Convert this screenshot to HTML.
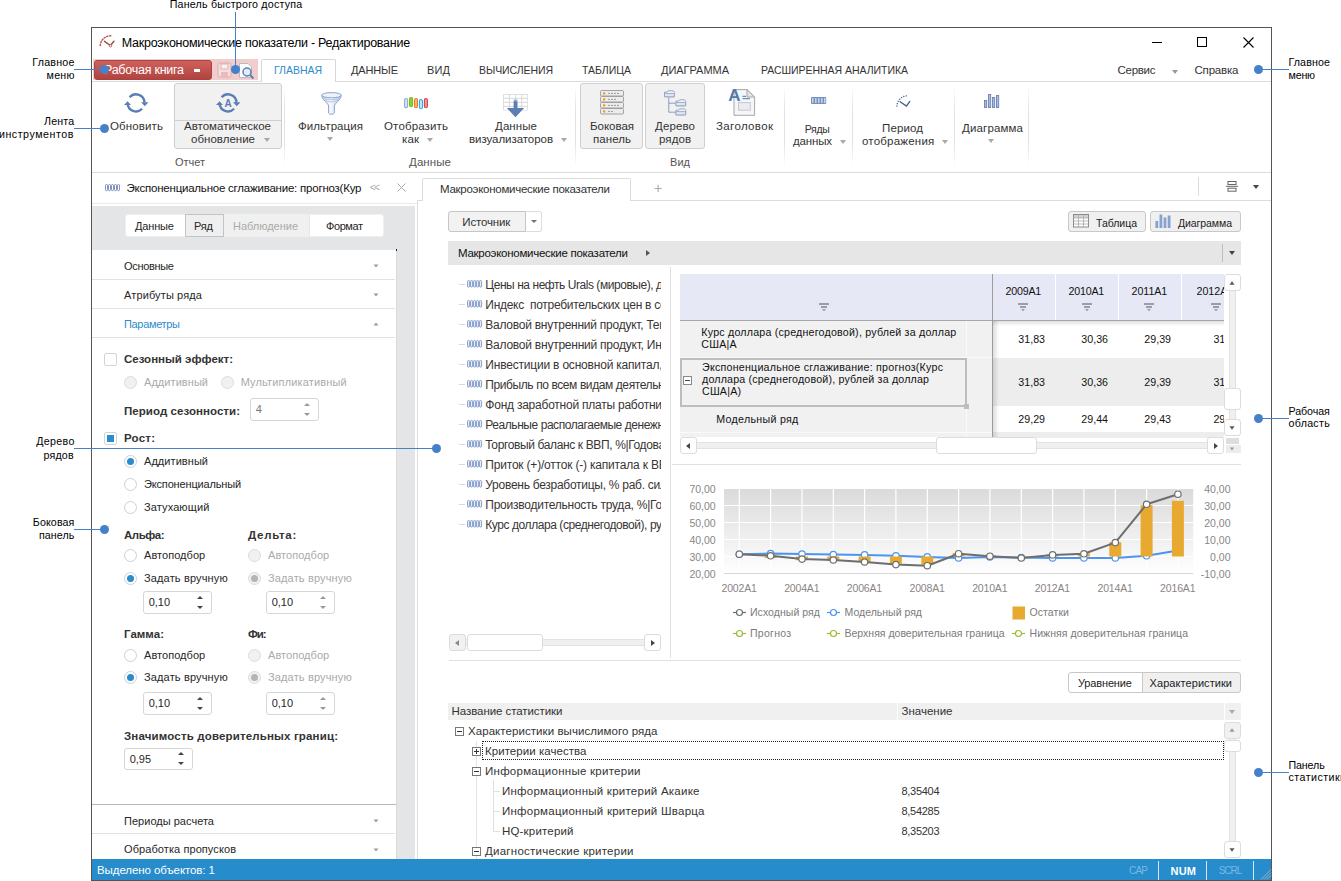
<!DOCTYPE html>
<html lang="ru"><head><meta charset="utf-8"><title>Макроэкономические показатели</title>
<style>
html,body{margin:0;padding:0;}
body{width:1341px;height:881px;position:relative;overflow:hidden;background:#fff;font-family:"Liberation Sans",sans-serif;}
.a{position:absolute;}
.t{position:absolute;white-space:pre;}
svg{overflow:visible;}
.tri{width:0;height:0;border-left:3.5px solid transparent;border-right:3.5px solid transparent;border-top:4px solid #999;}
.triu{width:0;height:0;border-left:3.5px solid transparent;border-right:3.5px solid transparent;border-bottom:4px solid #999;}

</style></head>
<body>
<div class="a" style="left:91px;top:27px;width:1181px;height:854px;background:#fff;border:1px solid #545454;box-sizing:border-box;"></div>
<span class="t" style="font-size:12.5px;color:#000;line-height:16.5px;top:35.05px;letter-spacing:-0.239px;left:121.7px;">Макроэкономические показатели - Редактирование</span>
<svg class="a" style="left:98px;top:35px" width="18" height="16" viewBox="0 0 18 16"><path d="M2.2 10.6 A10.5 10.5 0 0 1 12.8 0.8" fill="none" stroke="#c0504d" stroke-width="1.4" stroke-dasharray="1.3 1.6" stroke-linecap="round"/><path d="M6.5 6.3 L12.5 10.5 L15.9 6.2" fill="none" stroke="#a2504b" stroke-width="1.5" stroke-linecap="round"/><circle cx="12.5" cy="10.6" r="1.2" fill="#fff" stroke="#a2504b" stroke-width=".9"/></svg>
<div class="a" style="left:1152px;top:42px;width:10px;height:1px;background:#000;"></div>
<div class="a" style="left:1197px;top:37px;width:10px;height:10px;border:1px solid #000;box-sizing:border-box;"></div>
<svg class="a" style="left:1242.5px;top:37px" width="11" height="11" viewBox="0 0 11 11"><path d="M0.5 0.5 L10.5 10.5 M10.5 0.5 L0.5 10.5" stroke="#000" stroke-width="1.1" fill="none"/></svg>
<div class="a" style="left:93px;top:59px;width:165px;height:21px;background:#f3cdcd;"></div>
<div class="a" style="left:94px;top:60px;width:118px;height:20px;background:linear-gradient(#cf605d,#b04441);border:1px solid #a94340;box-sizing:border-box;border-radius:3px;"></div>
<span class="t" style="font-size:12.5px;color:#fff;line-height:16.5px;top:61.75px;letter-spacing:-0.251px;left:104px;">Рабочая книга</span>
<div class="a" style="left:194px;top:69px;width:6px;height:3px;background:#fff;"></div>
<svg class="a" style="left:217px;top:62px" width="16" height="16" viewBox="0 0 16 16"><rect x="1" y="1" width="13" height="14" rx="1.5" fill="#f6dede" stroke="#d9a9a9"/><rect x="4" y="2" width="7" height="5" fill="#fbeeee" stroke="#d9a9a9" stroke-width=".8"/><rect x="4" y="10" width="7" height="5" fill="#e9bcbc"/></svg>
<svg class="a" style="left:238px;top:62px" width="18" height="18" viewBox="0 0 18 18"><path d="M1.5 1.5 H10 L13.5 5 V15.5 H1.5 Z" fill="#fff" stroke="#b9b9c4"/><circle cx="9" cy="10" r="4" fill="#e6eefb" stroke="#5a7fb5" stroke-width="1.5"/><path d="M12 13 L15.5 16.5" stroke="#5a7fb5" stroke-width="2"/></svg>
<div class="a" style="left:92px;top:81px;width:1179px;height:1px;background:#dcdcdc;"></div>
<div class="a" style="left:261px;top:59px;width:75px;height:23px;background:#fff;border:1px solid #d6d6d6;box-sizing:border-box;border-bottom:none;border-radius:2px 2px 0 0;"></div>
<span class="t" style="font-size:10.5px;color:#2e8bcc;line-height:14.5px;top:62.75px;letter-spacing:-0.029px;left:274px;">ГЛАВНАЯ</span>
<span class="t" style="font-size:11.0px;color:#333;line-height:15.0px;top:62.5px;letter-spacing:-0.150px;left:351px;">ДАННЫЕ</span>
<span class="t" style="font-size:11.0px;color:#333;line-height:15.0px;top:62.5px;letter-spacing:0.148px;left:427px;">ВИД</span>
<span class="t" style="font-size:10.5px;color:#333;line-height:14.5px;top:62.75px;letter-spacing:-0.076px;left:479px;">ВЫЧИСЛЕНИЯ</span>
<span class="t" style="font-size:10.5px;color:#333;line-height:14.5px;top:62.75px;letter-spacing:-0.029px;left:582px;">ТАБЛИЦА</span>
<span class="t" style="font-size:11.0px;color:#333;line-height:15.0px;top:62.5px;letter-spacing:-0.033px;left:661px;">ДИАГРАММА</span>
<span class="t" style="font-size:10.5px;color:#333;line-height:14.5px;top:62.75px;letter-spacing:-0.042px;left:761px;">РАСШИРЕННАЯ АНАЛИТИКА</span>
<span class="t" style="font-size:11.5px;color:#333;line-height:15.5px;top:63.25px;letter-spacing:-0.278px;left:1117.5px;">Сервис</span>
<div class="a tri" style="left:1172px;top:69.5px"></div>
<span class="t" style="font-size:11.5px;color:#333;line-height:15.5px;top:63.25px;letter-spacing:-0.188px;left:1194.5px;">Справка</span>
<div class="a" style="left:92px;top:859px;width:1179px;height:21px;background:#278ccb;"></div>
<span class="t" style="font-size:11.5px;color:#fff;line-height:15.5px;top:863.25px;letter-spacing:-0.078px;left:97px;">Выделено объектов: 1</span>
<span class="t" style="font-size:10.0px;color:#79b8e2;line-height:14.0px;top:864.0px;letter-spacing:-0.781px;left:1129px;">CAP</span>
<div class="a" style="left:1158px;top:861px;width:1px;height:19px;background:#d6e9f6;"></div>
<span class="t" style="font-size:11.0px;color:#fff;line-height:15.0px;top:863.5px;font-weight:bold;letter-spacing:0.219px;left:1170.5px;">NUM</span>
<div class="a" style="left:1206px;top:861px;width:1px;height:19px;background:#d6e9f6;"></div>
<span class="t" style="font-size:10.0px;color:#79b8e2;line-height:14.0px;top:864.0px;letter-spacing:-0.996px;left:1218.7px;">SCRL</span>
<div class="a" style="left:1253px;top:861px;width:1px;height:19px;background:#d6e9f6;"></div>
<svg class="a" style="left:1259px;top:867px" width="12" height="13" viewBox="0 0 12 13"><path d="M12 2.5 L2 12.5 M12 5.5 L5 12.5 M12 8.5 L8 12.5" stroke="#9fb0bd" stroke-width="1"/></svg>
<div class="a" style="left:92px;top:172px;width:1179px;height:1px;background:#dcdcdc;"></div>
<div class="a" style="left:284px;top:85px;width:1px;height:82px;background:linear-gradient(#fff,#e2e2e2 30%,#e2e2e2 70%,#fff);"></div>
<div class="a" style="left:575px;top:85px;width:1px;height:82px;background:linear-gradient(#fff,#e2e2e2 30%,#e2e2e2 70%,#fff);"></div>
<div class="a" style="left:784px;top:85px;width:1px;height:82px;background:linear-gradient(#fff,#e2e2e2 30%,#e2e2e2 70%,#fff);"></div>
<div class="a" style="left:852px;top:85px;width:1px;height:82px;background:linear-gradient(#fff,#e2e2e2 30%,#e2e2e2 70%,#fff);"></div>
<div class="a" style="left:954px;top:85px;width:1px;height:82px;background:linear-gradient(#fff,#e2e2e2 30%,#e2e2e2 70%,#fff);"></div>
<div class="a" style="left:1028px;top:85px;width:1px;height:82px;background:linear-gradient(#fff,#e2e2e2 30%,#e2e2e2 70%,#fff);"></div>
<svg class="a" style="left:124px;top:93px" width="25" height="20" viewBox="0 0 25 20"><g fill="none" stroke="#5a7fb5" stroke-width="2.3"><path d="M5.6 4.3 A8.5 8.5 0 0 1 20.5 9.6"/><path d="M18.1 15.8 A8.5 8.5 0 0 1 3.5 10.4"/></g><path d="M17 9.3 L24.4 9.3 L20.8 13.2 Z" fill="#5a7fb5"/><path d="M0 12.1 L7 12.1 L3.6 8.2 Z" fill="#5a7fb5"/></svg>
<span class="t" style="font-size:11.5px;color:#333;line-height:15.5px;top:119.25px;letter-spacing:0.132px;left:110px;">Обновить</span>
<div class="a" style="left:174px;top:83px;width:108px;height:66px;background:#f1f1f1;border:1px solid #cfcfcf;box-sizing:border-box;border-radius:3px;"></div>
<div class="a" style="left:175px;top:120px;width:106px;height:1px;background:#cfcfcf;"></div>
<svg class="a" style="left:216px;top:93px" width="25" height="20" viewBox="0 0 25 20"><g fill="none" stroke="#5a7fb5" stroke-width="2.3"><path d="M5.6 4.3 A8.5 8.5 0 0 1 20.5 9.6"/><path d="M18.1 15.8 A8.5 8.5 0 0 1 3.5 10.4"/></g><path d="M17 9.3 L24.4 9.3 L20.8 13.2 Z" fill="#5a7fb5"/><path d="M0 12.1 L7 12.1 L3.6 8.2 Z" fill="#5a7fb5"/><text x="12.1" y="13.6" font-family="Liberation Sans, sans-serif" font-size="10" font-weight="bold" fill="#5a7fb5" text-anchor="middle">A</text></svg>
<span class="t" style="font-size:11.5px;color:#333;line-height:15.5px;top:119.25px;letter-spacing:0.008px;left:184px;">Автоматическое</span>
<span class="t" style="font-size:11.5px;color:#333;line-height:15.5px;top:132.45px;letter-spacing:0.016px;left:191px;">обновление</span>
<div class="a tri" style="left:264px;top:138px;border-top-color:#a8a8a8"></div>
<span class="t" style="font-size:11.0px;color:#555;line-height:15.0px;top:155.1px;letter-spacing:-0.031px;left:175px;">Отчет</span>
<svg class="a" style="left:320.5px;top:91.5px" width="21" height="23" viewBox="0 0 21 23"><defs><linearGradient id="fg" x1="0" x2="1"><stop offset="0" stop-color="#cfdbee"/><stop offset=".45" stop-color="#f6f9fd"/><stop offset="1" stop-color="#bccce6"/></linearGradient></defs><path d="M0.7 3.2 C0.7 7.5 7.6 11.5 7.6 14 V21 C7.6 22.6 13.4 22.6 13.4 21 V14 C13.4 11.5 20.3 7.5 20.3 3.2 Z" fill="url(#fg)" stroke="#8aa3cc" stroke-width="1"/><ellipse cx="10.5" cy="3.2" rx="9.8" ry="2.6" fill="#eef2f9" stroke="#8aa3cc" stroke-width="1"/><path d="M2 6 C6 8.2 15 8.2 19 6 M4.2 8.6 C8 10.2 13 10.2 16.8 8.6" fill="none" stroke="#a9bcdc" stroke-width=".8"/></svg>
<span class="t" style="font-size:11.5px;color:#333;line-height:15.5px;top:119.25px;letter-spacing:0.080px;left:298px;">Фильтрация</span>
<div class="a tri" style="left:327px;top:137px;border-top-color:#a8a8a8"></div>
<svg class="a" style="left:404px;top:96.5px" width="25" height="13" viewBox="0 0 25 13"><rect x="0.6" y="1.5" width="3" height="9.3" rx="1.5" fill="#dbe4f3" stroke="#8fa8d8" stroke-width="1.1"/><rect x="5.55" y="0.5" width="3" height="9.3" rx="1.5" fill="#8fd03a" stroke="#76bd22" stroke-width="1.1"/><rect x="10.5" y="1.5" width="3" height="9.3" rx="1.5" fill="#fbb98f" stroke="#f47a20" stroke-width="1.1"/><rect x="15.450000000000001" y="2.5" width="3" height="9.3" rx="1.5" fill="#c4ebf6" stroke="#2eaae8" stroke-width="1.1"/><rect x="20.400000000000002" y="1.5" width="3" height="9.3" rx="1.5" fill="#ee9a9a" stroke="#d34545" stroke-width="1.1"/></svg>
<span class="t" style="font-size:11.5px;color:#333;line-height:15.5px;top:119.25px;letter-spacing:0.146px;left:384px;">Отобразить</span>
<span class="t" style="font-size:11.5px;color:#333;line-height:15.5px;top:132.45px;letter-spacing:0.141px;left:402px;">как</span>
<div class="a tri" style="left:427px;top:138px;border-top-color:#a8a8a8"></div>
<svg class="a" style="left:503px;top:94px" width="25" height="24" viewBox="0 0 25 24"><defs><linearGradient id="ag" x1="0" y1="0" x2="0" y2="1"><stop offset="0" stop-color="#5b7fb0" stop-opacity="0"/><stop offset=".35" stop-color="#5b7fb0"/></linearGradient></defs><rect x="0" y="0" width="25" height="16.5" rx="1" fill="#dcdcdc"/><rect x="0.9" y="0.9" width="5" height="2.9" fill="#fff"/><rect x="7.0" y="0.9" width="5" height="2.9" fill="#fff"/><rect x="13.1" y="0.9" width="5" height="2.9" fill="#fff"/><rect x="19.199999999999996" y="0.9" width="5" height="2.9" fill="#fff"/><rect x="0.9" y="4.9" width="5" height="2.9" fill="#fff"/><rect x="7.0" y="4.9" width="5" height="2.9" fill="#fff"/><rect x="13.1" y="4.9" width="5" height="2.9" fill="#fff"/><rect x="19.199999999999996" y="4.9" width="5" height="2.9" fill="#fff"/><rect x="0.9" y="8.9" width="5" height="2.9" fill="#fff"/><rect x="7.0" y="8.9" width="5" height="2.9" fill="#fff"/><rect x="13.1" y="8.9" width="5" height="2.9" fill="#fff"/><rect x="19.199999999999996" y="8.9" width="5" height="2.9" fill="#fff"/><rect x="0.9" y="12.9" width="5" height="2.9" fill="#fff"/><rect x="7.0" y="12.9" width="5" height="2.9" fill="#fff"/><rect x="13.1" y="12.9" width="5" height="2.9" fill="#fff"/><rect x="19.199999999999996" y="12.9" width="5" height="2.9" fill="#fff"/><rect x="10.6" y="4.5" width="3.9" height="10" fill="url(#ag)"/><path d="M3.9 14.1 H21.1 L12.5 23.2 Z" fill="#5b7fb0"/></svg>
<span class="t" style="font-size:11.5px;color:#333;line-height:15.5px;top:119.25px;letter-spacing:0.087px;left:495px;">Данные</span>
<span class="t" style="font-size:11.5px;color:#333;line-height:15.5px;top:132.45px;letter-spacing:-0.053px;left:469px;">визуализаторов</span>
<div class="a tri" style="left:561px;top:138px;border-top-color:#a8a8a8"></div>
<span class="t" style="font-size:11.5px;color:#555;line-height:15.5px;top:154.85px;letter-spacing:0.087px;left:409px;">Данные</span>
<div class="a" style="left:580px;top:83px;width:63px;height:66px;background:#f1f1f1;border:1px solid #cfcfcf;box-sizing:border-box;border-radius:3px;"></div>
<svg class="a" style="left:600px;top:90px" width="24" height="25" viewBox="0 0 24 25"><rect x="0.5" y="0.5" width="23" height="5.5" rx="1" fill="#ececec" stroke="#9a9a9a" stroke-width=".9"/><rect x="3" y="2.3" width="2.2" height="2.2" fill="#f29a1f"/><path d="M8 3.4 H20" stroke="#9a9a9a" stroke-width="1" stroke-dasharray="2 1"/><rect x="0.5" y="6.5" width="23" height="5.5" rx="1" fill="#ececec" stroke="#9a9a9a" stroke-width=".9"/><rect x="3" y="8.3" width="2.2" height="2.2" fill="#f29a1f"/><path d="M8 9.4 H17" stroke="#9a9a9a" stroke-width="1" stroke-dasharray="2 1"/><rect x="0.5" y="12.5" width="23" height="5.5" rx="1" fill="#ececec" stroke="#9a9a9a" stroke-width=".9"/><rect x="3" y="14.3" width="2.2" height="2.2" fill="#f29a1f"/><path d="M8 15.4 H20" stroke="#9a9a9a" stroke-width="1" stroke-dasharray="2 1"/><rect x="0.5" y="18.5" width="23" height="5.5" rx="1" fill="#ececec" stroke="#9a9a9a" stroke-width=".9"/><rect x="3" y="20.3" width="2.2" height="2.2" fill="#f29a1f"/><path d="M8 21.4 H14" stroke="#9a9a9a" stroke-width="1" stroke-dasharray="2 1"/></svg>
<span class="t" style="font-size:11.5px;color:#333;line-height:15.5px;top:119.25px;letter-spacing:-0.018px;left:590px;">Боковая</span>
<span class="t" style="font-size:11.5px;color:#333;line-height:15.5px;top:132.45px;letter-spacing:0.059px;left:593px;">панель</span>
<div class="a" style="left:645px;top:83px;width:60px;height:66px;background:#f1f1f1;border:1px solid #cfcfcf;box-sizing:border-box;border-radius:3px;"></div>
<svg class="a" style="left:663.5px;top:90px" width="23" height="26" viewBox="0 0 23 26"><path d="M4.8 7.4 V22.2 H11.7 M4.8 13.2 H11.7" fill="none" stroke="#8d9dbd" stroke-width="1"/><path d="M0.5 2.1 H3.2 L4.2 0.8 H9.2 L10.3 2.3 V6.8 H0.5 Z" fill="#f2f5fa" stroke="#8d9dbd" stroke-width=".9"/><rect x="0.5" y="3.5" width="9.8" height="3.3" rx=".8" fill="#dfe6f2" stroke="#8d9dbd" stroke-width=".8"/><path d="M11.9 11.100000000000001 H14.600000000000001 L15.600000000000001 9.8 H20.6 L21.700000000000003 11.3 V15.8 H11.9 Z" fill="#f2f5fa" stroke="#8d9dbd" stroke-width=".9"/><rect x="11.9" y="12.5" width="9.8" height="3.3" rx=".8" fill="#dfe6f2" stroke="#8d9dbd" stroke-width=".8"/><path d="M11.9 20.2 H14.600000000000001 L15.600000000000001 18.9 H20.6 L21.700000000000003 20.4 V24.9 H11.9 Z" fill="#f2f5fa" stroke="#8d9dbd" stroke-width=".9"/><rect x="11.9" y="21.599999999999998" width="9.8" height="3.3" rx=".8" fill="#dfe6f2" stroke="#8d9dbd" stroke-width=".8"/></svg>
<span class="t" style="font-size:11.5px;color:#333;line-height:15.5px;top:119.25px;letter-spacing:0.128px;left:655px;">Дерево</span>
<span class="t" style="font-size:11.5px;color:#333;line-height:15.5px;top:132.45px;letter-spacing:0.070px;left:659px;">рядов</span>
<svg class="a" style="left:728px;top:88px" width="28" height="28" viewBox="0 0 28 28"><path d="M6 1.6 H19 L26.6 9 V27.3 H6 Z" fill="#f6f6f8" stroke="#a6a6ae"/><path d="M19 1.6 V9 H26.6 Z" fill="#e4e4ea" stroke="#a6a6ae" stroke-linejoin="round"/><rect x="10.5" y="14.6" width="11.8" height="7.6" fill="#ececf0" stroke="#c6c6ce"/><path d="M14.5 8.3 H18 M14.5 10.6 H22" stroke="#6f8cc0" stroke-width="1.3"/><text x="0.3" y="12.9" font-family="Liberation Sans, sans-serif" font-size="17" font-weight="bold" fill="#5279b0">A</text></svg>
<span class="t" style="font-size:11.5px;color:#333;line-height:15.5px;top:119.25px;letter-spacing:0.365px;left:716px;">Заголовок</span>
<span class="t" style="font-size:11.0px;color:#555;line-height:15.0px;top:155.1px;letter-spacing:0.047px;left:670px;">Вид</span>
<svg class="a" style="left:810.8px;top:96.9px" width="16" height="8" viewBox="0 0 16 8"><rect x="0" y="0" width="15.2" height="7" rx="1" fill="#7890bf"/><rect x="1.3" y="1" width="1.1" height="5" rx=".5" fill="#e8eef8"/><rect x="4.3" y="1" width="1.1" height="5" rx=".5" fill="#e8eef8"/><rect x="7.3" y="1" width="1.1" height="5" rx=".5" fill="#e8eef8"/><rect x="10.3" y="1" width="1.1" height="5" rx=".5" fill="#e8eef8"/><rect x="13.3" y="1" width="1.1" height="5" rx=".5" fill="#e8eef8"/></svg>
<span class="t" style="font-size:10.5px;color:#333;line-height:14.5px;top:121.75px;letter-spacing:-0.272px;left:804.7px;">Ряды</span>
<span class="t" style="font-size:11.5px;color:#333;line-height:15.5px;top:134.45px;letter-spacing:-0.166px;left:793px;">данных</span>
<div class="a tri" style="left:840px;top:140px;border-top-color:#a8a8a8"></div>
<svg class="a" style="left:896px;top:94.5px" width="15" height="13" viewBox="0 0 15 13"><path d="M0.9 11.2 A10.5 10.5 0 0 1 11.2 0.8" fill="none" stroke="#4f6a94" stroke-width="1.3" stroke-dasharray="0.3 2.2" stroke-linecap="round"/><path d="M4.1 6.7 L10.4 11.1 L13.7 6.6" fill="none" stroke="#46608c" stroke-width="1.4" stroke-linecap="round"/></svg>
<span class="t" style="font-size:11.5px;color:#333;line-height:15.5px;top:121.25px;letter-spacing:0.131px;left:882px;">Период</span>
<span class="t" style="font-size:11.5px;color:#333;line-height:15.5px;top:134.45px;letter-spacing:0.214px;left:862px;">отображения</span>
<div class="a tri" style="left:942px;top:140px;border-top-color:#a8a8a8"></div>
<svg class="a" style="left:984px;top:94px" width="17" height="15" viewBox="0 0 17 15"><rect x="0.5" y="6.5" width="2.2" height="7" fill="#a9bbdd" stroke="#6d83b3" stroke-width=".9"/><rect x="4.5" y="0.5" width="2.2" height="13" fill="#a9bbdd" stroke="#6d83b3" stroke-width=".9"/><rect x="8.5" y="3.5" width="2.2" height="10" fill="#a9bbdd" stroke="#6d83b3" stroke-width=".9"/><rect x="12.5" y="1.5" width="2.2" height="12" fill="#a9bbdd" stroke="#6d83b3" stroke-width=".9"/></svg>
<span class="t" style="font-size:11.5px;color:#333;line-height:15.5px;top:121.25px;letter-spacing:0.148px;left:962px;">Диаграмма</span>
<div class="a tri" style="left:988px;top:139px;border-top-color:#a8a8a8"></div>
<svg class="a" style="left:105px;top:184.3px" width="16" height="7.2" viewBox="0 0 16 7.2"><rect x="0.5" y="0.5" width="2.0" height="6.2" rx="1" fill="#fff" stroke="#7185b5" stroke-width=".9"/><rect x="3.5" y="0.5" width="2.0" height="6.2" rx="1" fill="#fff" stroke="#7185b5" stroke-width=".9"/><rect x="6.5" y="0.5" width="2.0" height="6.2" rx="1" fill="#fff" stroke="#7185b5" stroke-width=".9"/><rect x="9.5" y="0.5" width="2.0" height="6.2" rx="1" fill="#fff" stroke="#7185b5" stroke-width=".9"/><rect x="12.5" y="0.5" width="2.0" height="6.2" rx="1" fill="#fff" stroke="#7185b5" stroke-width=".9"/></svg>
<span class="t" style="font-size:11.5px;color:#111;line-height:15.5px;top:180.95px;letter-spacing:-0.221px;left:126.5px;">Экспоненциальное сглаживание: прогноз(Кур</span>
<span class="t" style="font-size:10.0px;color:#aaa;line-height:14.0px;top:181.3px;letter-spacing:-1.287px;left:369.7px;">&lt;&lt;</span>
<svg class="a" style="left:397px;top:183px" width="9" height="9" viewBox="0 0 9 9"><path d="M0.5 0.5 L8.5 8.5 M8.5 0.5 L0.5 8.5" stroke="#aaa" stroke-width="1" fill="none"/></svg>
<div class="a" style="left:92px;top:203px;width:325px;height:1px;background:#e9e9e9;"></div>
<div class="a" style="left:92px;top:206px;width:323px;height:653px;background:#e4e5e6;"></div>
<div class="a" style="left:417px;top:200px;width:1px;height:659px;background:#dedede;"></div>
<div class="a" style="left:125px;top:214px;width:259px;height:23px;background:#fff;border:1px solid #efefef;box-sizing:border-box;border-radius:3px;"></div>
<div class="a" style="left:224px;top:215px;width:85px;height:21px;background:#f0f0f0;"></div>
<div class="a" style="left:185px;top:214px;width:39px;height:23px;background:#efefef;border:1px solid #c4c4c4;box-sizing:border-box;"></div>
<div class="a" style="left:309px;top:215px;width:1px;height:21px;background:#e6e6e6;"></div>
<span class="t" style="font-size:11px;color:#262626;line-height:15px;top:218.5px;letter-spacing:-0.150px;left:135px;">Данные</span>
<span class="t" style="font-size:11px;color:#262626;line-height:15px;top:218.5px;letter-spacing:-0.180px;left:194px;">Ряд</span>
<span class="t" style="font-size:11px;color:#aaa;line-height:15px;top:218.5px;letter-spacing:-0.019px;left:233px;">Наблюдение</span>
<span class="t" style="font-size:11px;color:#262626;line-height:15px;top:218.5px;letter-spacing:-0.416px;left:326px;">Формат</span>
<div class="a" style="left:92px;top:249.5px;width:304px;height:609.5px;background:#fff;"></div>
<div class="a" style="left:396px;top:250px;width:1px;height:609px;background:#dadbdc;"></div>
<div class="a" style="left:396px;top:249px;width:1px;height:2px;background:#222;"></div>
<span class="t" style="font-size:11px;color:#262626;line-height:15px;top:258.5px;letter-spacing:-0.315px;left:124px;">Основные</span>
<div class="a tri" style="left:373px;top:264px;transform:scale(.8)"></div>
<div class="a" style="left:92px;top:279px;width:303px;height:1px;background:#e2e2e2;"></div>
<span class="t" style="font-size:11px;color:#262626;line-height:15px;top:287.5px;letter-spacing:0.129px;left:124px;">Атрибуты ряда</span>
<div class="a tri" style="left:373px;top:293px;transform:scale(.8)"></div>
<div class="a" style="left:92px;top:308px;width:303px;height:1px;background:#e2e2e2;"></div>
<span class="t" style="font-size:11px;color:#2e8bcc;line-height:15px;top:316.5px;letter-spacing:-0.330px;left:124px;">Параметры</span>
<div class="a triu" style="left:373px;top:322px;transform:scale(.8)"></div>
<div class="a" style="left:92px;top:337px;width:303px;height:1px;background:#e2e2e2;"></div>
<div class="a" style="left:104px;top:353px;width:13px;height:13px;background:#fff;border:1px solid #d4d4d4;box-sizing:border-box;border-radius:2px;"></div>
<span class="t" style="font-size:11.5px;color:#333;line-height:15.5px;top:352.25px;font-weight:bold;letter-spacing:-0.005px;left:124px;">Сезонный эффект:</span>
<div class="a" style="left:124.2px;top:376.09999999999997px;width:12.6px;height:12.6px;background:#f1f1f1;border:1px solid #dcdcdc;box-sizing:border-box;border-radius:7px;"></div>
<span class="t" style="font-size:11px;color:#aaa;line-height:15px;top:375.3px;letter-spacing:0.057px;left:144px;">Аддитивный</span>
<div class="a" style="left:221.2px;top:376.09999999999997px;width:12.6px;height:12.6px;background:#f1f1f1;border:1px solid #dcdcdc;box-sizing:border-box;border-radius:7px;"></div>
<span class="t" style="font-size:11px;color:#aaa;line-height:15px;top:375.3px;letter-spacing:0.148px;left:240.7px;">Мультипликативный</span>
<span class="t" style="font-size:11.5px;color:#333;line-height:15.5px;top:404.05px;font-weight:bold;letter-spacing:0.055px;left:124px;">Период сезонности:</span>
<div class="a" style="left:250px;top:398px;width:69px;height:23px;background:#fff;border:1px solid #d6d6d6;box-sizing:border-box;border-radius:3px;"></div>
<span class="t" style="font-size:11px;color:#777;line-height:15px;top:402.3px;left:255.7px;">4</span>
<div class="a" style="left:303.6px;top:402.9px;width:0;height:0;border-left:3.5px solid transparent;border-right:3.5px solid transparent;border-bottom:3.6px solid #999"></div>
<div class="a" style="left:303.6px;top:412.7px;width:0;height:0;border-left:3.5px solid transparent;border-right:3.5px solid transparent;border-top:3.6px solid #999"></div>
<div class="a" style="left:104px;top:432px;width:13px;height:13px;background:#fff;border:1px solid #d4d4d4;box-sizing:border-box;border-radius:2px;"></div>
<div class="a" style="left:107px;top:435px;width:7px;height:7px;background:#2a8dcc;"></div>
<span class="t" style="font-size:11.5px;color:#333;line-height:15.5px;top:431.25px;font-weight:bold;letter-spacing:0.219px;left:124px;">Рост:</span>
<div class="a" style="left:124.2px;top:455.0px;width:12.6px;height:12.6px;background:#fff;border:1px solid #cfcfcf;box-sizing:border-box;border-radius:7px;"></div>
<div class="a" style="left:127.1px;top:457.90000000000003px;width:6.8px;height:6.8px;background:#2a8dcc;border-radius:4px;"></div>
<span class="t" style="font-size:11px;color:#262626;line-height:15px;top:454.2px;letter-spacing:0.057px;left:144px;">Аддитивный</span>
<div class="a" style="left:124.2px;top:478.0px;width:12.6px;height:12.6px;background:#fff;border:1px solid #cfcfcf;box-sizing:border-box;border-radius:7px;"></div>
<span class="t" style="font-size:11px;color:#262626;line-height:15px;top:477.0px;letter-spacing:-0.162px;left:144px;">Экспоненциальный</span>
<div class="a" style="left:124.2px;top:501.0px;width:12.6px;height:12.6px;background:#fff;border:1px solid #cfcfcf;box-sizing:border-box;border-radius:7px;"></div>
<span class="t" style="font-size:11px;color:#262626;line-height:15px;top:500.2px;letter-spacing:0.115px;left:144px;">Затухающий</span>
<span class="t" style="font-size:11.5px;color:#333;line-height:15.5px;top:527.85px;font-weight:bold;letter-spacing:-0.474px;left:124px;">Альфа:</span>
<span class="t" style="font-size:11.5px;color:#333;line-height:15.5px;top:527.85px;font-weight:bold;letter-spacing:0.724px;left:248px;">Дельта:</span>
<div class="a" style="left:124.2px;top:549.0px;width:12.6px;height:12.6px;background:#fff;border:1px solid #cfcfcf;box-sizing:border-box;border-radius:7px;"></div>
<span class="t" style="font-size:11px;color:#262626;line-height:15px;top:548.1px;letter-spacing:0.048px;left:144px;">Автоподбор</span>
<div class="a" style="left:124.2px;top:572.0px;width:12.6px;height:12.6px;background:#fff;border:1px solid #cfcfcf;box-sizing:border-box;border-radius:7px;"></div>
<div class="a" style="left:127.1px;top:574.9px;width:6.8px;height:6.8px;background:#2a8dcc;border-radius:4px;"></div>
<span class="t" style="font-size:11px;color:#262626;line-height:15px;top:571.1px;letter-spacing:0.148px;left:144px;">Задать вручную</span>
<div class="a" style="left:248.2px;top:549.0px;width:12.6px;height:12.6px;background:#f1f1f1;border:1px solid #dcdcdc;box-sizing:border-box;border-radius:7px;"></div>
<span class="t" style="font-size:11px;color:#aaa;line-height:15px;top:548.1px;letter-spacing:0.048px;left:268px;">Автоподбор</span>
<div class="a" style="left:248.2px;top:572.0px;width:12.6px;height:12.6px;background:#f1f1f1;border:1px solid #dcdcdc;box-sizing:border-box;border-radius:7px;"></div>
<div class="a" style="left:251.1px;top:574.9px;width:6.8px;height:6.8px;background:#b5b5b5;border-radius:4px;"></div>
<span class="t" style="font-size:11px;color:#aaa;line-height:15px;top:571.1px;letter-spacing:0.148px;left:268px;">Задать вручную</span>
<div class="a" style="left:143px;top:591.2px;width:69px;height:22.4px;background:#fff;border:1px solid #d6d6d6;box-sizing:border-box;border-radius:3px;"></div>
<span class="t" style="font-size:11px;color:#262626;line-height:15px;top:595.2px;left:148.7px;">0,10</span>
<div class="a" style="left:196.6px;top:595.8000000000001px;width:0;height:0;border-left:3.5px solid transparent;border-right:3.5px solid transparent;border-bottom:3.6px solid #444"></div>
<div class="a" style="left:196.6px;top:605.6000000000001px;width:0;height:0;border-left:3.5px solid transparent;border-right:3.5px solid transparent;border-top:3.6px solid #444"></div>
<div class="a" style="left:266px;top:591.2px;width:69px;height:22.4px;background:#fff;border:1px solid #d6d6d6;box-sizing:border-box;border-radius:3px;"></div>
<span class="t" style="font-size:11px;color:#262626;line-height:15px;top:595.2px;left:271.7px;">0,10</span>
<div class="a" style="left:319.6px;top:595.8000000000001px;width:0;height:0;border-left:3.5px solid transparent;border-right:3.5px solid transparent;border-bottom:3.6px solid #999"></div>
<div class="a" style="left:319.6px;top:605.6000000000001px;width:0;height:0;border-left:3.5px solid transparent;border-right:3.5px solid transparent;border-top:3.6px solid #999"></div>
<span class="t" style="font-size:11.5px;color:#333;line-height:15.5px;top:626.85px;font-weight:bold;letter-spacing:0.028px;left:124px;">Гамма:</span>
<span class="t" style="font-size:11.5px;color:#333;line-height:15.5px;top:626.85px;font-weight:bold;letter-spacing:-1.059px;left:248px;">Фи:</span>
<div class="a" style="left:124.2px;top:649.0px;width:12.6px;height:12.6px;background:#fff;border:1px solid #cfcfcf;box-sizing:border-box;border-radius:7px;"></div>
<span class="t" style="font-size:11px;color:#262626;line-height:15px;top:648.1px;letter-spacing:0.048px;left:144px;">Автоподбор</span>
<div class="a" style="left:124.2px;top:671.0px;width:12.6px;height:12.6px;background:#fff;border:1px solid #cfcfcf;box-sizing:border-box;border-radius:7px;"></div>
<div class="a" style="left:127.1px;top:673.9px;width:6.8px;height:6.8px;background:#2a8dcc;border-radius:4px;"></div>
<span class="t" style="font-size:11px;color:#262626;line-height:15px;top:670.1px;letter-spacing:0.148px;left:144px;">Задать вручную</span>
<div class="a" style="left:248.2px;top:649.0px;width:12.6px;height:12.6px;background:#f1f1f1;border:1px solid #dcdcdc;box-sizing:border-box;border-radius:7px;"></div>
<span class="t" style="font-size:11px;color:#aaa;line-height:15px;top:648.1px;letter-spacing:0.048px;left:268px;">Автоподбор</span>
<div class="a" style="left:248.2px;top:671.0px;width:12.6px;height:12.6px;background:#f1f1f1;border:1px solid #dcdcdc;box-sizing:border-box;border-radius:7px;"></div>
<div class="a" style="left:251.1px;top:673.9px;width:6.8px;height:6.8px;background:#b5b5b5;border-radius:4px;"></div>
<span class="t" style="font-size:11px;color:#aaa;line-height:15px;top:670.1px;letter-spacing:0.148px;left:268px;">Задать вручную</span>
<div class="a" style="left:143px;top:692.2px;width:69px;height:22.4px;background:#fff;border:1px solid #d6d6d6;box-sizing:border-box;border-radius:3px;"></div>
<span class="t" style="font-size:11px;color:#262626;line-height:15px;top:696.2px;left:148.7px;">0,10</span>
<div class="a" style="left:196.6px;top:696.8000000000001px;width:0;height:0;border-left:3.5px solid transparent;border-right:3.5px solid transparent;border-bottom:3.6px solid #444"></div>
<div class="a" style="left:196.6px;top:706.6000000000001px;width:0;height:0;border-left:3.5px solid transparent;border-right:3.5px solid transparent;border-top:3.6px solid #444"></div>
<div class="a" style="left:266px;top:692.2px;width:69px;height:22.4px;background:#fff;border:1px solid #d6d6d6;box-sizing:border-box;border-radius:3px;"></div>
<span class="t" style="font-size:11px;color:#262626;line-height:15px;top:696.2px;left:271.7px;">0,10</span>
<div class="a" style="left:319.6px;top:696.8000000000001px;width:0;height:0;border-left:3.5px solid transparent;border-right:3.5px solid transparent;border-bottom:3.6px solid #999"></div>
<div class="a" style="left:319.6px;top:706.6000000000001px;width:0;height:0;border-left:3.5px solid transparent;border-right:3.5px solid transparent;border-top:3.6px solid #999"></div>
<span class="t" style="font-size:11.5px;color:#333;line-height:15.5px;top:729.25px;font-weight:bold;letter-spacing:0.156px;left:124px;">Значимость доверительных границ:</span>
<div class="a" style="left:124px;top:748px;width:69px;height:22px;background:#fff;border:1px solid #d6d6d6;box-sizing:border-box;border-radius:3px;"></div>
<span class="t" style="font-size:11px;color:#262626;line-height:15px;top:751.8px;left:129.7px;">0,95</span>
<div class="a" style="left:177.6px;top:752.4px;width:0;height:0;border-left:3.5px solid transparent;border-right:3.5px solid transparent;border-bottom:3.6px solid #444"></div>
<div class="a" style="left:177.6px;top:762.2px;width:0;height:0;border-left:3.5px solid transparent;border-right:3.5px solid transparent;border-top:3.6px solid #444"></div>
<div class="a" style="left:92px;top:804px;width:304px;height:1px;background:#b8b8b8;"></div>
<span class="t" style="font-size:11px;color:#262626;line-height:15px;top:813.5px;letter-spacing:0.023px;left:124px;">Периоды расчета</span>
<div class="a tri" style="left:373px;top:819px;transform:scale(.8)"></div>
<div class="a" style="left:92px;top:833px;width:303px;height:1px;background:#e2e2e2;"></div>
<span class="t" style="font-size:11px;color:#262626;line-height:15px;top:842.2px;letter-spacing:0.085px;left:124px;">Обработка пропусков</span>
<div class="a tri" style="left:373px;top:847.7px;transform:scale(.8)"></div>
<div class="a" style="left:418px;top:200px;width:853px;height:1px;background:#dcdcdc;"></div>
<div class="a" style="left:422.4px;top:178px;width:208.6px;height:23px;background:#fff;border:1px solid #dcdcdc;box-sizing:border-box;border-bottom:none;border-radius:2px 2px 0 0;"></div>
<span class="t" style="font-size:11.5px;color:#333;line-height:15.5px;top:182.05px;letter-spacing:-0.268px;left:440px;">Макроэкономические показатели</span>
<span class="t" style="font-size:14px;color:#aaa;line-height:18px;top:179.0px;left:654px;">+</span>
<div class="a" style="left:1198px;top:177px;width:1px;height:19px;background:#dcdcdc;"></div>
<svg class="a" style="left:1226px;top:181px" width="12" height="11" viewBox="0 0 12 11"><rect x="2" y="0.5" width="8" height="3" fill="#fff" stroke="#666"/><rect x="2" y="7.2" width="8" height="3" fill="#fff" stroke="#666"/><path d="M0 5.3 H12" stroke="#666" stroke-width="1"/></svg>
<div class="a tri" style="left:1253px;top:184.7px;border-top-color:#444;"></div>
<div class="a" style="left:526px;top:211px;width:16px;height:21px;background:#fff;border:1px solid #dcdcdc;box-sizing:border-box;border-radius:0 3px 3px 0;border-left:none;"></div>
<div class="a" style="left:448px;top:211px;width:78px;height:21px;background:#f2f2f2;border:1px solid #c6c6c6;box-sizing:border-box;border-radius:3px 0 0 3px;"></div>
<span class="t" style="font-size:11.5px;color:#333;line-height:15.5px;top:214.85px;letter-spacing:-0.158px;left:462.3px;">Источник</span>
<div class="a" style="left:531.2px;top:220.2px;width:0;height:0;border-left:3px solid transparent;border-right:3px solid transparent;border-top:3.2px solid #707070"></div>
<div class="a" style="left:1068px;top:211px;width:78px;height:21px;background:#f0f0f0;border:1px solid #c8c8c8;box-sizing:border-box;border-radius:3px;"></div>
<svg class="a" style="left:1073px;top:214.3px" width="16" height="14" viewBox="0 0 16 14"><rect x="0.5" y="0.5" width="15" height="12.5" fill="#fff" stroke="#8a8a8a"/><rect x="1" y="1" width="14" height="3" fill="#d2d2d2"/><path d="M0.5 4 H15.5" stroke="#b0b0b0" stroke-width=".9"/><path d="M0.5 7 H15.5" stroke="#b0b0b0" stroke-width=".9"/><path d="M0.5 10 H15.5" stroke="#b0b0b0" stroke-width=".9"/><path d="M5.5 0.5 V13" stroke="#b0b0b0" stroke-width=".9"/><path d="M10.5 0.5 V13" stroke="#b0b0b0" stroke-width=".9"/></svg>
<span class="t" style="font-size:10.5px;color:#222;line-height:14.5px;top:215.55px;letter-spacing:-0.029px;left:1096px;">Таблица</span>
<div class="a" style="left:1150px;top:211px;width:91px;height:21px;background:#f0f0f0;border:1px solid #c8c8c8;box-sizing:border-box;border-radius:3px;"></div>
<svg class="a" style="left:1155px;top:213.8px" width="17" height="15" viewBox="0 0 17 15"><rect x="0.4" y="7" width="2.8" height="7" fill="#86a2d0"/><rect x="4.5" y="0.5" width="2.8" height="13.5" fill="#86a2d0"/><rect x="8.6" y="3.5" width="2.8" height="10.5" fill="#86a2d0"/><rect x="12.7" y="1.5" width="2.8" height="12.5" fill="#86a2d0"/></svg>
<span class="t" style="font-size:10.5px;color:#222;line-height:14.5px;top:215.55px;letter-spacing:-0.076px;left:1178px;">Диаграмма</span>
<div class="a" style="left:448px;top:241px;width:793px;height:24px;background:#e6e6e6;"></div>
<span class="t" style="font-size:11.5px;color:#111;line-height:15.5px;top:245.95px;letter-spacing:-0.268px;left:458px;">Макроэкономические показатели</span>
<div class="a" style="left:646px;top:250px;width:0;height:0;border-top:3px solid transparent;border-bottom:3px solid transparent;border-left:4px solid #555"></div>
<div class="a" style="left:1222px;top:244px;width:1px;height:18px;background:#bdbdbd;"></div>
<div class="a tri" style="left:1229px;top:251px;border-top-color:#444;"></div>
<div class="a" style="left:459px;top:284px;width:6px;height:1px;background:#d9d9d9;"></div>
<svg class="a" style="left:467px;top:280.4px" width="16" height="7.6" viewBox="0 0 16 7.6"><rect x="0.5" y="0.5" width="2.1" height="6.6" rx="1" fill="#e6edf8" stroke="#7f97c6" stroke-width=".9"/><rect x="3.5" y="0.5" width="2.1" height="6.6" rx="1" fill="#e6edf8" stroke="#7f97c6" stroke-width=".9"/><rect x="6.5" y="0.5" width="2.1" height="6.6" rx="1" fill="#e6edf8" stroke="#7f97c6" stroke-width=".9"/><rect x="9.5" y="0.5" width="2.1" height="6.6" rx="1" fill="#e6edf8" stroke="#7f97c6" stroke-width=".9"/><rect x="12.5" y="0.5" width="2.1" height="6.6" rx="1" fill="#e6edf8" stroke="#7f97c6" stroke-width=".9"/></svg>
<span class="t" style="font-size:12px;color:#3a3535;line-height:16px;top:276.7px;letter-spacing:-0.452px;left:485.3px;width:176px;overflow:hidden;">Цены на нефть Urals (мировые), долл./барр.|Годовая</span>
<div class="a" style="left:459px;top:304px;width:6px;height:1px;background:#d9d9d9;"></div>
<svg class="a" style="left:467px;top:300.4px" width="16" height="7.6" viewBox="0 0 16 7.6"><rect x="0.5" y="0.5" width="2.1" height="6.6" rx="1" fill="#e6edf8" stroke="#7f97c6" stroke-width=".9"/><rect x="3.5" y="0.5" width="2.1" height="6.6" rx="1" fill="#e6edf8" stroke="#7f97c6" stroke-width=".9"/><rect x="6.5" y="0.5" width="2.1" height="6.6" rx="1" fill="#e6edf8" stroke="#7f97c6" stroke-width=".9"/><rect x="9.5" y="0.5" width="2.1" height="6.6" rx="1" fill="#e6edf8" stroke="#7f97c6" stroke-width=".9"/><rect x="12.5" y="0.5" width="2.1" height="6.6" rx="1" fill="#e6edf8" stroke="#7f97c6" stroke-width=".9"/></svg>
<span class="t" style="font-size:12px;color:#3a3535;line-height:16px;top:296.7px;letter-spacing:-0.285px;left:485.3px;width:176px;overflow:hidden;">Индекс  потребительских цен в сопоставимых ценах</span>
<div class="a" style="left:459px;top:324px;width:6px;height:1px;background:#d9d9d9;"></div>
<svg class="a" style="left:467px;top:320.4px" width="16" height="7.6" viewBox="0 0 16 7.6"><rect x="0.5" y="0.5" width="2.1" height="6.6" rx="1" fill="#e6edf8" stroke="#7f97c6" stroke-width=".9"/><rect x="3.5" y="0.5" width="2.1" height="6.6" rx="1" fill="#e6edf8" stroke="#7f97c6" stroke-width=".9"/><rect x="6.5" y="0.5" width="2.1" height="6.6" rx="1" fill="#e6edf8" stroke="#7f97c6" stroke-width=".9"/><rect x="9.5" y="0.5" width="2.1" height="6.6" rx="1" fill="#e6edf8" stroke="#7f97c6" stroke-width=".9"/><rect x="12.5" y="0.5" width="2.1" height="6.6" rx="1" fill="#e6edf8" stroke="#7f97c6" stroke-width=".9"/></svg>
<span class="t" style="font-size:12px;color:#3a3535;line-height:16px;top:316.7px;letter-spacing:-0.249px;left:485.3px;width:176px;overflow:hidden;">Валовой внутренний продукт, Темп роста|Годовая</span>
<div class="a" style="left:459px;top:344px;width:6px;height:1px;background:#d9d9d9;"></div>
<svg class="a" style="left:467px;top:340.4px" width="16" height="7.6" viewBox="0 0 16 7.6"><rect x="0.5" y="0.5" width="2.1" height="6.6" rx="1" fill="#e6edf8" stroke="#7f97c6" stroke-width=".9"/><rect x="3.5" y="0.5" width="2.1" height="6.6" rx="1" fill="#e6edf8" stroke="#7f97c6" stroke-width=".9"/><rect x="6.5" y="0.5" width="2.1" height="6.6" rx="1" fill="#e6edf8" stroke="#7f97c6" stroke-width=".9"/><rect x="9.5" y="0.5" width="2.1" height="6.6" rx="1" fill="#e6edf8" stroke="#7f97c6" stroke-width=".9"/><rect x="12.5" y="0.5" width="2.1" height="6.6" rx="1" fill="#e6edf8" stroke="#7f97c6" stroke-width=".9"/></svg>
<span class="t" style="font-size:12px;color:#3a3535;line-height:16px;top:336.7px;letter-spacing:-0.236px;left:485.3px;width:176px;overflow:hidden;">Валовой внутренний продукт, Индекс|Годовая</span>
<div class="a" style="left:459px;top:364px;width:6px;height:1px;background:#d9d9d9;"></div>
<svg class="a" style="left:467px;top:360.4px" width="16" height="7.6" viewBox="0 0 16 7.6"><rect x="0.5" y="0.5" width="2.1" height="6.6" rx="1" fill="#e6edf8" stroke="#7f97c6" stroke-width=".9"/><rect x="3.5" y="0.5" width="2.1" height="6.6" rx="1" fill="#e6edf8" stroke="#7f97c6" stroke-width=".9"/><rect x="6.5" y="0.5" width="2.1" height="6.6" rx="1" fill="#e6edf8" stroke="#7f97c6" stroke-width=".9"/><rect x="9.5" y="0.5" width="2.1" height="6.6" rx="1" fill="#e6edf8" stroke="#7f97c6" stroke-width=".9"/><rect x="12.5" y="0.5" width="2.1" height="6.6" rx="1" fill="#e6edf8" stroke="#7f97c6" stroke-width=".9"/></svg>
<span class="t" style="font-size:12px;color:#3a3535;line-height:16px;top:356.7px;letter-spacing:-0.200px;left:485.3px;width:176px;overflow:hidden;">Инвестиции в основной капитал, %|Годовая</span>
<div class="a" style="left:459px;top:384px;width:6px;height:1px;background:#d9d9d9;"></div>
<svg class="a" style="left:467px;top:380.4px" width="16" height="7.6" viewBox="0 0 16 7.6"><rect x="0.5" y="0.5" width="2.1" height="6.6" rx="1" fill="#e6edf8" stroke="#7f97c6" stroke-width=".9"/><rect x="3.5" y="0.5" width="2.1" height="6.6" rx="1" fill="#e6edf8" stroke="#7f97c6" stroke-width=".9"/><rect x="6.5" y="0.5" width="2.1" height="6.6" rx="1" fill="#e6edf8" stroke="#7f97c6" stroke-width=".9"/><rect x="9.5" y="0.5" width="2.1" height="6.6" rx="1" fill="#e6edf8" stroke="#7f97c6" stroke-width=".9"/><rect x="12.5" y="0.5" width="2.1" height="6.6" rx="1" fill="#e6edf8" stroke="#7f97c6" stroke-width=".9"/></svg>
<span class="t" style="font-size:12px;color:#3a3535;line-height:16px;top:376.7px;letter-spacing:-0.407px;left:485.3px;width:176px;overflow:hidden;">Прибыль по всем видам деятельности, %|Годовая</span>
<div class="a" style="left:459px;top:404px;width:6px;height:1px;background:#d9d9d9;"></div>
<svg class="a" style="left:467px;top:400.4px" width="16" height="7.6" viewBox="0 0 16 7.6"><rect x="0.5" y="0.5" width="2.1" height="6.6" rx="1" fill="#e6edf8" stroke="#7f97c6" stroke-width=".9"/><rect x="3.5" y="0.5" width="2.1" height="6.6" rx="1" fill="#e6edf8" stroke="#7f97c6" stroke-width=".9"/><rect x="6.5" y="0.5" width="2.1" height="6.6" rx="1" fill="#e6edf8" stroke="#7f97c6" stroke-width=".9"/><rect x="9.5" y="0.5" width="2.1" height="6.6" rx="1" fill="#e6edf8" stroke="#7f97c6" stroke-width=".9"/><rect x="12.5" y="0.5" width="2.1" height="6.6" rx="1" fill="#e6edf8" stroke="#7f97c6" stroke-width=".9"/></svg>
<span class="t" style="font-size:12px;color:#3a3535;line-height:16px;top:396.7px;letter-spacing:-0.232px;left:485.3px;width:176px;overflow:hidden;">Фонд заработной платы работников, %|Годовая</span>
<div class="a" style="left:459px;top:424px;width:6px;height:1px;background:#d9d9d9;"></div>
<svg class="a" style="left:467px;top:420.4px" width="16" height="7.6" viewBox="0 0 16 7.6"><rect x="0.5" y="0.5" width="2.1" height="6.6" rx="1" fill="#e6edf8" stroke="#7f97c6" stroke-width=".9"/><rect x="3.5" y="0.5" width="2.1" height="6.6" rx="1" fill="#e6edf8" stroke="#7f97c6" stroke-width=".9"/><rect x="6.5" y="0.5" width="2.1" height="6.6" rx="1" fill="#e6edf8" stroke="#7f97c6" stroke-width=".9"/><rect x="9.5" y="0.5" width="2.1" height="6.6" rx="1" fill="#e6edf8" stroke="#7f97c6" stroke-width=".9"/><rect x="12.5" y="0.5" width="2.1" height="6.6" rx="1" fill="#e6edf8" stroke="#7f97c6" stroke-width=".9"/></svg>
<span class="t" style="font-size:12px;color:#3a3535;line-height:16px;top:416.7px;letter-spacing:-0.442px;left:485.3px;width:176px;overflow:hidden;">Реальные располагаемые денежные доходы</span>
<div class="a" style="left:459px;top:444px;width:6px;height:1px;background:#d9d9d9;"></div>
<svg class="a" style="left:467px;top:440.4px" width="16" height="7.6" viewBox="0 0 16 7.6"><rect x="0.5" y="0.5" width="2.1" height="6.6" rx="1" fill="#e6edf8" stroke="#7f97c6" stroke-width=".9"/><rect x="3.5" y="0.5" width="2.1" height="6.6" rx="1" fill="#e6edf8" stroke="#7f97c6" stroke-width=".9"/><rect x="6.5" y="0.5" width="2.1" height="6.6" rx="1" fill="#e6edf8" stroke="#7f97c6" stroke-width=".9"/><rect x="9.5" y="0.5" width="2.1" height="6.6" rx="1" fill="#e6edf8" stroke="#7f97c6" stroke-width=".9"/><rect x="12.5" y="0.5" width="2.1" height="6.6" rx="1" fill="#e6edf8" stroke="#7f97c6" stroke-width=".9"/></svg>
<span class="t" style="font-size:12px;color:#3a3535;line-height:16px;top:436.7px;letter-spacing:-0.369px;left:485.3px;width:176px;overflow:hidden;">Торговый баланс к ВВП, %|Годовая</span>
<div class="a" style="left:459px;top:464px;width:6px;height:1px;background:#d9d9d9;"></div>
<svg class="a" style="left:467px;top:460.4px" width="16" height="7.6" viewBox="0 0 16 7.6"><rect x="0.5" y="0.5" width="2.1" height="6.6" rx="1" fill="#e6edf8" stroke="#7f97c6" stroke-width=".9"/><rect x="3.5" y="0.5" width="2.1" height="6.6" rx="1" fill="#e6edf8" stroke="#7f97c6" stroke-width=".9"/><rect x="6.5" y="0.5" width="2.1" height="6.6" rx="1" fill="#e6edf8" stroke="#7f97c6" stroke-width=".9"/><rect x="9.5" y="0.5" width="2.1" height="6.6" rx="1" fill="#e6edf8" stroke="#7f97c6" stroke-width=".9"/><rect x="12.5" y="0.5" width="2.1" height="6.6" rx="1" fill="#e6edf8" stroke="#7f97c6" stroke-width=".9"/></svg>
<span class="t" style="font-size:12px;color:#3a3535;line-height:16px;top:456.7px;letter-spacing:-0.195px;left:485.3px;width:176px;overflow:hidden;">Приток (+)/отток (-) капитала к ВВП, %|Годовая</span>
<div class="a" style="left:459px;top:484px;width:6px;height:1px;background:#d9d9d9;"></div>
<svg class="a" style="left:467px;top:480.4px" width="16" height="7.6" viewBox="0 0 16 7.6"><rect x="0.5" y="0.5" width="2.1" height="6.6" rx="1" fill="#e6edf8" stroke="#7f97c6" stroke-width=".9"/><rect x="3.5" y="0.5" width="2.1" height="6.6" rx="1" fill="#e6edf8" stroke="#7f97c6" stroke-width=".9"/><rect x="6.5" y="0.5" width="2.1" height="6.6" rx="1" fill="#e6edf8" stroke="#7f97c6" stroke-width=".9"/><rect x="9.5" y="0.5" width="2.1" height="6.6" rx="1" fill="#e6edf8" stroke="#7f97c6" stroke-width=".9"/><rect x="12.5" y="0.5" width="2.1" height="6.6" rx="1" fill="#e6edf8" stroke="#7f97c6" stroke-width=".9"/></svg>
<span class="t" style="font-size:12px;color:#3a3535;line-height:16px;top:476.7px;letter-spacing:-0.273px;left:485.3px;width:176px;overflow:hidden;">Уровень безработицы, % раб. силы|Годовая</span>
<div class="a" style="left:459px;top:504px;width:6px;height:1px;background:#d9d9d9;"></div>
<svg class="a" style="left:467px;top:500.4px" width="16" height="7.6" viewBox="0 0 16 7.6"><rect x="0.5" y="0.5" width="2.1" height="6.6" rx="1" fill="#e6edf8" stroke="#7f97c6" stroke-width=".9"/><rect x="3.5" y="0.5" width="2.1" height="6.6" rx="1" fill="#e6edf8" stroke="#7f97c6" stroke-width=".9"/><rect x="6.5" y="0.5" width="2.1" height="6.6" rx="1" fill="#e6edf8" stroke="#7f97c6" stroke-width=".9"/><rect x="9.5" y="0.5" width="2.1" height="6.6" rx="1" fill="#e6edf8" stroke="#7f97c6" stroke-width=".9"/><rect x="12.5" y="0.5" width="2.1" height="6.6" rx="1" fill="#e6edf8" stroke="#7f97c6" stroke-width=".9"/></svg>
<span class="t" style="font-size:12px;color:#3a3535;line-height:16px;top:496.7px;letter-spacing:-0.244px;left:485.3px;width:176px;overflow:hidden;">Производительность труда, %|Годовая</span>
<div class="a" style="left:459px;top:524px;width:6px;height:1px;background:#d9d9d9;"></div>
<svg class="a" style="left:467px;top:520.4px" width="16" height="7.6" viewBox="0 0 16 7.6"><rect x="0.5" y="0.5" width="2.1" height="6.6" rx="1" fill="#e6edf8" stroke="#7f97c6" stroke-width=".9"/><rect x="3.5" y="0.5" width="2.1" height="6.6" rx="1" fill="#e6edf8" stroke="#7f97c6" stroke-width=".9"/><rect x="6.5" y="0.5" width="2.1" height="6.6" rx="1" fill="#e6edf8" stroke="#7f97c6" stroke-width=".9"/><rect x="9.5" y="0.5" width="2.1" height="6.6" rx="1" fill="#e6edf8" stroke="#7f97c6" stroke-width=".9"/><rect x="12.5" y="0.5" width="2.1" height="6.6" rx="1" fill="#e6edf8" stroke="#7f97c6" stroke-width=".9"/></svg>
<span class="t" style="font-size:12px;color:#3a3535;line-height:16px;top:516.7px;letter-spacing:-0.429px;left:485.3px;width:176px;overflow:hidden;">Курс доллара (среднегодовой), рублей за доллар США</span>
<div class="a" style="left:464.5px;top:639.3px;width:180px;height:6.5px;background:#f0f0f0;border:1px solid #e2e2e2;box-sizing:border-box;"></div>
<div class="a" style="left:448.5px;top:634.3px;width:17px;height:16.5px;background:#f1f1f1;border:1px solid #dcdcdc;box-sizing:border-box;border-radius:3px;"></div>
<div class="a" style="left:643.5px;top:634.3px;width:17px;height:16.5px;background:#fff;border:1px solid #dcdcdc;box-sizing:border-box;border-radius:3px;"></div>
<div class="a" style="left:466.5px;top:634.3px;width:76.5px;height:16.5px;background:#fff;border:1px solid #dcdcdc;box-sizing:border-box;border-radius:3px;"></div>
<div class="a" style="left:454.5px;top:639.55px;width:0;height:0;border-top:3px solid transparent;border-bottom:3px solid transparent;border-right:4px solid #888"></div>
<div class="a" style="left:650.5px;top:639.55px;width:0;height:0;border-top:3px solid transparent;border-bottom:3px solid transparent;border-left:4px solid #444"></div>
<div class="a" style="left:670px;top:267px;width:1px;height:391px;background:#e0e0e0;"></div>
<div class="a" style="left:448.5px;top:660px;width:792.5px;height:1px;background:#e0e0e0;"></div>
<div class="a" style="left:672px;top:463.5px;width:568.5px;height:1px;background:#e0e0e0;"></div>
<div class="a" style="left:680px;top:274px;width:544.2px;height:46px;background:#e6e8f5;"></div>
<div class="a" style="left:1055px;top:274px;width:1px;height:46px;background:#fff;"></div>
<div class="a" style="left:1118px;top:274px;width:1px;height:46px;background:#fff;"></div>
<div class="a" style="left:1181px;top:274px;width:1px;height:46px;background:#fff;"></div>
<svg class="a" style="left:819px;top:303px" width="10" height="8" viewBox="0 0 10 8"><g fill="#9d9da4"><rect x="0" y="0" width="10" height="2"/><rect x="2" y="3" width="6" height="2"/><path d="M3 6 H7 L5 8.2 Z"/></g></svg>
<span class="t" style="font-size:10.67px;color:#111;line-height:14.67px;top:283.665px;letter-spacing:-0.190px;left:1005.5px;">2009A1</span>
<svg class="a" style="left:1018px;top:303px" width="10" height="8" viewBox="0 0 10 8"><g fill="#9d9da4"><rect x="0" y="0" width="10" height="2"/><rect x="2" y="3" width="6" height="2"/><path d="M3 6 H7 L5 8.2 Z"/></g></svg>
<span class="t" style="font-size:10.67px;color:#111;line-height:14.67px;top:283.665px;letter-spacing:-0.190px;left:1068.5px;">2010A1</span>
<svg class="a" style="left:1082px;top:303px" width="10" height="8" viewBox="0 0 10 8"><g fill="#9d9da4"><rect x="0" y="0" width="10" height="2"/><rect x="2" y="3" width="6" height="2"/><path d="M3 6 H7 L5 8.2 Z"/></g></svg>
<span class="t" style="font-size:10.67px;color:#111;line-height:14.67px;top:283.665px;letter-spacing:-0.031px;left:1131.5px;">2011A1</span>
<svg class="a" style="left:1144px;top:303px" width="10" height="8" viewBox="0 0 10 8"><g fill="#9d9da4"><rect x="0" y="0" width="10" height="2"/><rect x="2" y="3" width="6" height="2"/><path d="M3 6 H7 L5 8.2 Z"/></g></svg>
<span class="t" style="font-size:10.67px;color:#111;line-height:14.67px;top:283.665px;left:1196.5px;width:27.7px;overflow:hidden;">2012A1</span>
<svg class="a" style="left:1211px;top:303px" width="10" height="8" viewBox="0 0 10 8"><g fill="#9d9da4"><rect x="0" y="0" width="10" height="2"/><rect x="2" y="3" width="6" height="2"/><path d="M3 6 H7 L5 8.2 Z"/></g></svg>
<div class="a" style="left:680px;top:321px;width:313px;height:37px;background:#f1f1f1;"></div>
<div class="a" style="left:680px;top:358px;width:313px;height:48px;background:#f1f1f1;"></div>
<div class="a" style="left:680px;top:406px;width:313px;height:26px;background:#f1f1f1;"></div>
<div class="a" style="left:680px;top:432px;width:313px;height:5px;background:#f1f1f1;"></div>
<div class="a" style="left:966px;top:321px;width:1px;height:116px;background:#fafafa;"></div>
<div class="a" style="left:680px;top:357px;width:313px;height:1px;background:#fafafa;"></div>
<div class="a" style="left:680px;top:432px;width:313px;height:1px;background:#fafafa;"></div>
<div class="a" style="left:993px;top:358px;width:231.2px;height:48px;background:#ededed;"></div>
<div class="a" style="left:993px;top:432px;width:231.2px;height:5.5px;background:#ededed;"></div>
<div class="a" style="left:993px;top:321px;width:6px;height:116px;background:linear-gradient(90deg,rgba(0,0,0,.13),rgba(0,0,0,0));"></div>
<div class="a" style="left:993px;top:321px;width:231.2px;height:5px;background:linear-gradient(180deg,rgba(0,0,0,.12),rgba(0,0,0,0));"></div>
<div class="a" style="left:680px;top:320px;width:544.2px;height:1px;background:#a6a6a6;"></div>
<div class="a" style="left:992px;top:274px;width:1px;height:163px;background:#9c9c9c;"></div>
<div class="a" style="left:680px;top:358px;width:287px;height:48.5px;border:2px solid #bdbdbd;box-sizing:border-box;"></div>
<div class="a" style="left:964px;top:404px;width:5px;height:5px;background:#bdbdbd;"></div>
<div class="a" style="left:683px;top:376px;width:9px;height:9px;background:#fff;border:1px solid #8a8a8a;box-sizing:border-box;"></div>
<div class="a" style="left:685px;top:380px;width:5px;height:1px;background:#444;"></div>
<span class="t" style="font-size:10.67px;color:#111;line-height:14.67px;top:324.865px;letter-spacing:0.210px;left:701.3px;">Курс доллара (среднегодовой), рублей за доллар</span>
<span class="t" style="font-size:10.67px;color:#111;line-height:14.67px;top:336.76500000000004px;left:701.3px;letter-spacing:.2px;">США|A</span>
<span class="t" style="font-size:10.67px;color:#111;line-height:14.67px;top:360.365px;letter-spacing:0.237px;left:702px;">Экспоненциальное сглаживание: прогноз(Курс</span>
<span class="t" style="font-size:10.67px;color:#111;line-height:14.67px;top:371.865px;letter-spacing:0.177px;left:702px;">доллара (среднегодовой), рублей за доллар</span>
<span class="t" style="font-size:10.67px;color:#111;line-height:14.67px;top:384.46500000000003px;left:702px;letter-spacing:.2px;">США|A)</span>
<span class="t" style="font-size:10.67px;color:#111;line-height:14.67px;top:411.665px;letter-spacing:0.290px;left:716.3px;">Модельный ряд</span>
<span class="t" style="font-size:10.67px;color:#111;line-height:14.67px;top:332.165px;right:296px;">31,83</span>
<span class="t" style="font-size:10.67px;color:#111;line-height:14.67px;top:332.165px;right:233px;">30,36</span>
<span class="t" style="font-size:10.67px;color:#111;line-height:14.67px;top:332.165px;right:170px;">29,39</span>
<span class="t" style="font-size:10.67px;color:#111;line-height:14.67px;top:332.165px;left:1213.4px;width:10.6px;overflow:hidden;">31,09</span>
<span class="t" style="font-size:10.67px;color:#111;line-height:14.67px;top:375.165px;right:296px;">31,83</span>
<span class="t" style="font-size:10.67px;color:#111;line-height:14.67px;top:375.165px;right:233px;">30,36</span>
<span class="t" style="font-size:10.67px;color:#111;line-height:14.67px;top:375.165px;right:170px;">29,39</span>
<span class="t" style="font-size:10.67px;color:#111;line-height:14.67px;top:375.165px;left:1213.4px;width:10.6px;overflow:hidden;">31,09</span>
<span class="t" style="font-size:10.67px;color:#111;line-height:14.67px;top:412.165px;right:296px;">29,29</span>
<span class="t" style="font-size:10.67px;color:#111;line-height:14.67px;top:412.165px;right:233px;">29,44</span>
<span class="t" style="font-size:10.67px;color:#111;line-height:14.67px;top:412.165px;right:170px;">29,43</span>
<span class="t" style="font-size:10.67px;color:#111;line-height:14.67px;top:412.165px;left:1213.4px;width:10.6px;overflow:hidden;">29,38</span>
<div class="a" style="left:1229.1000000000001px;top:290.3px;width:6.6px;height:129.7px;background:#f0f0f0;border:1px solid #e2e2e2;box-sizing:border-box;"></div>
<div class="a" style="left:1224.4px;top:274.3px;width:16.2px;height:17px;background:#fff;border:1px solid #dcdcdc;box-sizing:border-box;border-radius:3px;"></div>
<div class="a" style="left:1224.4px;top:419.0px;width:16.2px;height:17px;background:#fff;border:1px solid #dcdcdc;box-sizing:border-box;border-radius:3px;"></div>
<div class="a" style="left:1224.4px;top:387.6px;width:16.2px;height:22.8px;background:#fff;border:1px solid #dcdcdc;box-sizing:border-box;border-radius:3px;"></div>
<div class="a triu" style="left:1228.9px;top:280.8px;border-bottom-color:#555;transform:scale(.85)"></div>
<div class="a tri" style="left:1228.9px;top:425.5px;border-top-color:#555;transform:scale(.85)"></div>
<div class="a" style="left:1226px;top:437.6px;width:13px;height:6.5px;background:#dedede;"></div>
<div class="a" style="left:1226px;top:444.5px;width:14.5px;height:8.5px;background:#ececec;"></div>
<div class="a tri" style="left:1229.3px;top:447px;border-top-color:#999;transform:scale(.7)"></div>
<div class="a" style="left:696px;top:442.4px;width:511.5px;height:6.5px;background:#f0f0f0;border:1px solid #e2e2e2;box-sizing:border-box;"></div>
<div class="a" style="left:680px;top:437.4px;width:17px;height:16.5px;background:#fff;border:1px solid #dcdcdc;box-sizing:border-box;border-radius:3px;"></div>
<div class="a" style="left:1206.5px;top:437.4px;width:17px;height:16.5px;background:#fff;border:1px solid #dcdcdc;box-sizing:border-box;border-radius:3px;"></div>
<div class="a" style="left:935.5px;top:437.4px;width:101px;height:16.5px;background:#fff;border:1px solid #dcdcdc;box-sizing:border-box;border-radius:3px;"></div>
<div class="a" style="left:686px;top:442.65px;width:0;height:0;border-top:3px solid transparent;border-bottom:3px solid transparent;border-right:4px solid #444"></div>
<div class="a" style="left:1213.5px;top:442.65px;width:0;height:0;border-top:3px solid transparent;border-bottom:3px solid transparent;border-left:4px solid #444"></div>
<svg class="a" style="left:0;top:0" width="1341" height="881" viewBox="0 0 1341 881"><defs><linearGradient id="pg" x1="0" y1="0" x2="0" y2="1"><stop offset="0" stop-color="#dadada"/><stop offset="1" stop-color="#ffffff"/></linearGradient></defs><rect x="724" y="488.6" width="469.20000000000005" height="85.39999999999998" fill="url(#pg)"/><path d="M724 488.5 H1193.2" stroke="#fff" stroke-width="1.2"/><path d="M724 505.5 H1193.2" stroke="#fff" stroke-width="1.2"/><path d="M724 522.5 H1193.2" stroke="#fff" stroke-width="1.2"/><path d="M724 539.5 H1193.2" stroke="#fff" stroke-width="1.2"/><path d="M724 556.5 H1193.2" stroke="#fff" stroke-width="1.2"/><path d="M739.3 488.6 V574" stroke="#fff" stroke-width="1.2"/><path d="M770.6 488.6 V574" stroke="#fff" stroke-width="1.2"/><path d="M802.0 488.6 V574" stroke="#fff" stroke-width="1.2"/><path d="M833.3 488.6 V574" stroke="#fff" stroke-width="1.2"/><path d="M864.6 488.6 V574" stroke="#fff" stroke-width="1.2"/><path d="M895.9 488.6 V574" stroke="#fff" stroke-width="1.2"/><path d="M927.3 488.6 V574" stroke="#fff" stroke-width="1.2"/><path d="M958.6 488.6 V574" stroke="#fff" stroke-width="1.2"/><path d="M989.9 488.6 V574" stroke="#fff" stroke-width="1.2"/><path d="M1021.3 488.6 V574" stroke="#fff" stroke-width="1.2"/><path d="M1052.6 488.6 V574" stroke="#fff" stroke-width="1.2"/><path d="M1083.9 488.6 V574" stroke="#fff" stroke-width="1.2"/><path d="M1115.3 488.6 V574" stroke="#fff" stroke-width="1.2"/><path d="M1146.6 488.6 V574" stroke="#fff" stroke-width="1.2"/><path d="M1177.9 488.6 V574" stroke="#fff" stroke-width="1.2"/><path d="M724 573.5 H1193.2" stroke="#d6d6d6" stroke-width="1"/><polyline points="739.3,554.2 770.6,553.6 802.0,554.0 833.3,554.5 864.6,554.9 895.9,555.8 927.3,556.9 958.6,558.0 989.9,556.9 1021.3,557.5 1052.6,558.0 1083.9,558.0 1115.3,558.0 1146.6,555.8 1177.9,550.5" fill="none" stroke="#4d94f0" stroke-width="2" stroke-linejoin="round"/><circle cx="739.3" cy="554.2" r="3.2" fill="#fff" stroke="#4d94f0" stroke-width="1.2"/><circle cx="770.6" cy="553.6" r="3.2" fill="#fff" stroke="#4d94f0" stroke-width="1.2"/><circle cx="802.0" cy="554.0" r="3.2" fill="#fff" stroke="#4d94f0" stroke-width="1.2"/><circle cx="833.3" cy="554.5" r="3.2" fill="#fff" stroke="#4d94f0" stroke-width="1.2"/><circle cx="864.6" cy="554.9" r="3.2" fill="#fff" stroke="#4d94f0" stroke-width="1.2"/><circle cx="895.9" cy="555.8" r="3.2" fill="#fff" stroke="#4d94f0" stroke-width="1.2"/><circle cx="927.3" cy="556.9" r="3.2" fill="#fff" stroke="#4d94f0" stroke-width="1.2"/><circle cx="958.6" cy="558.0" r="3.2" fill="#fff" stroke="#4d94f0" stroke-width="1.2"/><circle cx="989.9" cy="556.9" r="3.2" fill="#fff" stroke="#4d94f0" stroke-width="1.2"/><circle cx="1021.3" cy="557.5" r="3.2" fill="#fff" stroke="#4d94f0" stroke-width="1.2"/><circle cx="1052.6" cy="558.0" r="3.2" fill="#fff" stroke="#4d94f0" stroke-width="1.2"/><circle cx="1083.9" cy="558.0" r="3.2" fill="#fff" stroke="#4d94f0" stroke-width="1.2"/><circle cx="1115.3" cy="558.0" r="3.2" fill="#fff" stroke="#4d94f0" stroke-width="1.2"/><circle cx="1146.6" cy="555.8" r="3.2" fill="#fff" stroke="#4d94f0" stroke-width="1.2"/><circle cx="1177.9" cy="550.5" r="3.2" fill="#fff" stroke="#4d94f0" stroke-width="1.2"/><rect x="764.6" y="556.5" width="12" height="1.5" fill="#e8a930"/><rect x="796.0" y="556.5" width="12" height="3.7" fill="#e8a930"/><rect x="827.3" y="556.5" width="12" height="4.3" fill="#e8a930"/><rect x="858.6" y="556.5" width="12" height="5.5" fill="#e8a930"/><rect x="889.9" y="556.5" width="12" height="7.0" fill="#e8a930"/><rect x="921.3" y="556.5" width="12" height="8.1" fill="#e8a930"/><rect x="952.6" y="553.0" width="12" height="3.5" fill="#e8a930"/><rect x="983.9" y="555.3" width="12" height="1.2" fill="#e8a930"/><rect x="1015.3" y="556.5" width="12" height="0.7" fill="#e8a930"/><rect x="1046.6" y="554.3" width="12" height="2.2" fill="#e8a930"/><rect x="1077.9" y="553.2" width="12" height="3.3" fill="#e8a930"/><rect x="1109.3" y="542.2" width="12" height="14.3" fill="#e8a930"/><rect x="1140.6" y="505.2" width="12" height="51.3" fill="#e8a930"/><rect x="1171.9" y="500.8" width="12" height="55.7" fill="#e8a930"/><polyline points="739.3,554.2 770.6,555.8 802.0,559.1 833.3,560.0 864.6,562.0 895.9,564.6 927.3,565.7 958.6,553.7 989.9,556.2 1021.3,558.0 1052.6,554.9 1083.9,553.8 1115.3,542.6 1146.6,504.3 1177.9,494.2" fill="none" stroke="#6e6e6e" stroke-width="2" stroke-linejoin="round"/><circle cx="739.3" cy="554.2" r="3.2" fill="#fff" stroke="#6e6e6e" stroke-width="1.2"/><circle cx="770.6" cy="555.8" r="3.2" fill="#fff" stroke="#6e6e6e" stroke-width="1.2"/><circle cx="802.0" cy="559.1" r="3.2" fill="#fff" stroke="#6e6e6e" stroke-width="1.2"/><circle cx="833.3" cy="560.0" r="3.2" fill="#fff" stroke="#6e6e6e" stroke-width="1.2"/><circle cx="864.6" cy="562.0" r="3.2" fill="#fff" stroke="#6e6e6e" stroke-width="1.2"/><circle cx="895.9" cy="564.6" r="3.2" fill="#fff" stroke="#6e6e6e" stroke-width="1.2"/><circle cx="927.3" cy="565.7" r="3.2" fill="#fff" stroke="#6e6e6e" stroke-width="1.2"/><circle cx="958.6" cy="553.7" r="3.2" fill="#fff" stroke="#6e6e6e" stroke-width="1.2"/><circle cx="989.9" cy="556.2" r="3.2" fill="#fff" stroke="#6e6e6e" stroke-width="1.2"/><circle cx="1021.3" cy="558.0" r="3.2" fill="#fff" stroke="#6e6e6e" stroke-width="1.2"/><circle cx="1052.6" cy="554.9" r="3.2" fill="#fff" stroke="#6e6e6e" stroke-width="1.2"/><circle cx="1083.9" cy="553.8" r="3.2" fill="#fff" stroke="#6e6e6e" stroke-width="1.2"/><circle cx="1115.3" cy="542.6" r="3.2" fill="#fff" stroke="#6e6e6e" stroke-width="1.2"/><circle cx="1146.6" cy="504.3" r="3.2" fill="#fff" stroke="#6e6e6e" stroke-width="1.2"/><circle cx="1177.9" cy="494.2" r="3.2" fill="#fff" stroke="#6e6e6e" stroke-width="1.2"/><path d="M733.0 612.5 H746.0" stroke="#6e6e6e" stroke-width="1.2"/><circle cx="739.5" cy="612.5" r="3" fill="#fff" stroke="#6e6e6e" stroke-width="1.2"/><path d="M827.0 612.5 H840.0" stroke="#4d94f0" stroke-width="1.2"/><circle cx="833.5" cy="612.5" r="3" fill="#fff" stroke="#4d94f0" stroke-width="1.2"/><path d="M733.0 633.5 H746.0" stroke="#9bbb3a" stroke-width="1.2"/><circle cx="739.5" cy="633.5" r="3" fill="#fff" stroke="#9bbb3a" stroke-width="1.2"/><path d="M827.0 633.5 H840.0" stroke="#9bbb3a" stroke-width="1.2"/><circle cx="833.5" cy="633.5" r="3" fill="#fff" stroke="#9bbb3a" stroke-width="1.2"/><path d="M1012.0 633.5 H1025.0" stroke="#9bbb3a" stroke-width="1.2"/><circle cx="1018.5" cy="633.5" r="3" fill="#fff" stroke="#9bbb3a" stroke-width="1.2"/><rect x="1012.5" y="606.5" width="12.5" height="13" fill="#e8a930"/></svg>
<span class="t" style="font-size:10.5px;color:#8b8585;line-height:14.5px;top:481.75px;letter-spacing:-0.070px;left:689.5px;">70,00</span>
<span class="t" style="font-size:10.5px;color:#8b8585;line-height:14.5px;top:498.75px;letter-spacing:-0.070px;left:689.5px;">60,00</span>
<span class="t" style="font-size:10.5px;color:#8b8585;line-height:14.5px;top:515.75px;letter-spacing:-0.070px;left:689.5px;">50,00</span>
<span class="t" style="font-size:10.5px;color:#8b8585;line-height:14.5px;top:532.75px;letter-spacing:-0.070px;left:689.5px;">40,00</span>
<span class="t" style="font-size:10.5px;color:#8b8585;line-height:14.5px;top:549.75px;letter-spacing:-0.070px;left:689.5px;">30,00</span>
<span class="t" style="font-size:10.5px;color:#8b8585;line-height:14.5px;top:566.75px;letter-spacing:-0.070px;left:689.5px;">20,00</span>
<span class="t" style="font-size:10.5px;color:#8b8585;line-height:14.5px;top:481.75px;right:110.5px;">40,00</span>
<span class="t" style="font-size:10.5px;color:#8b8585;line-height:14.5px;top:498.75px;right:110.5px;">30,00</span>
<span class="t" style="font-size:10.5px;color:#8b8585;line-height:14.5px;top:515.75px;right:110.5px;">20,00</span>
<span class="t" style="font-size:10.5px;color:#8b8585;line-height:14.5px;top:532.75px;right:110.5px;">10,00</span>
<span class="t" style="font-size:10.5px;color:#8b8585;line-height:14.5px;top:549.75px;right:110.5px;">0,00</span>
<span class="t" style="font-size:10.5px;color:#8b8585;line-height:14.5px;top:566.75px;right:110.5px;">-10,00</span>
<span class="t" style="font-size:10.5px;color:#8b8585;line-height:14.5px;top:581.45px;letter-spacing:-0.161px;left:721.5px;">2002A1</span>
<span class="t" style="font-size:10.5px;color:#8b8585;line-height:14.5px;top:581.45px;letter-spacing:-0.161px;left:784.16px;">2004A1</span>
<span class="t" style="font-size:10.5px;color:#8b8585;line-height:14.5px;top:581.45px;letter-spacing:-0.161px;left:846.8199999999999px;">2006A1</span>
<span class="t" style="font-size:10.5px;color:#8b8585;line-height:14.5px;top:581.45px;letter-spacing:-0.161px;left:909.48px;">2008A1</span>
<span class="t" style="font-size:10.5px;color:#8b8585;line-height:14.5px;top:581.45px;letter-spacing:-0.161px;left:972.14px;">2010A1</span>
<span class="t" style="font-size:10.5px;color:#8b8585;line-height:14.5px;top:581.45px;letter-spacing:-0.161px;left:1034.8px;">2012A1</span>
<span class="t" style="font-size:10.5px;color:#8b8585;line-height:14.5px;top:581.45px;letter-spacing:-0.161px;left:1097.46px;">2014A1</span>
<span class="t" style="font-size:10.5px;color:#8b8585;line-height:14.5px;top:581.45px;letter-spacing:-0.161px;left:1160.1200000000001px;">2016A1</span>
<span class="t" style="font-size:10.5px;color:#7b7b7b;line-height:14.5px;top:605.25px;letter-spacing:0.061px;left:750px;">Исходный ряд</span>
<span class="t" style="font-size:10.5px;color:#7b7b7b;line-height:14.5px;top:605.25px;letter-spacing:0.012px;left:844.5px;">Модельный ряд</span>
<span class="t" style="font-size:10.5px;color:#7b7b7b;line-height:14.5px;top:605.25px;letter-spacing:0.083px;left:1029.5px;">Остатки</span>
<span class="t" style="font-size:10.5px;color:#7b7b7b;line-height:14.5px;top:626.25px;letter-spacing:0.268px;left:750px;">Прогноз</span>
<span class="t" style="font-size:10.5px;color:#7b7b7b;line-height:14.5px;top:626.25px;letter-spacing:0.003px;left:844.5px;">Верхняя доверительная граница</span>
<span class="t" style="font-size:10.5px;color:#7b7b7b;line-height:14.5px;top:626.25px;letter-spacing:0.071px;left:1029.5px;">Нижняя доверительная граница</span>
<div class="a" style="left:1068px;top:672px;width:75px;height:21px;background:#fff;border:1px solid #c8c8c8;box-sizing:border-box;border-radius:3px 0 0 3px;"></div>
<div class="a" style="left:1142px;top:672px;width:99px;height:21px;background:#f0f0f0;border:1px solid #c8c8c8;box-sizing:border-box;border-radius:0 3px 3px 0;"></div>
<span class="t" style="font-size:11px;color:#222;line-height:15px;top:675.8px;letter-spacing:-0.151px;left:1078px;">Уравнение</span>
<span class="t" style="font-size:11px;color:#222;line-height:15px;top:675.8px;letter-spacing:0.064px;left:1149.6px;">Характеристики</span>
<div class="a" style="left:448px;top:703px;width:793px;height:17px;background:#f0f0f0;"></div>
<div class="a" style="left:897px;top:703px;width:1px;height:17px;background:#fff;"></div>
<div class="a" style="left:1224px;top:703px;width:1.2px;height:17px;background:#fff;"></div>
<span class="t" style="font-size:11.5px;color:#333;line-height:15.5px;top:703.75px;letter-spacing:-0.068px;left:451.5px;">Название статистики</span>
<span class="t" style="font-size:11.5px;color:#333;line-height:15.5px;top:703.75px;left:901.5px;">Значение</span>
<div class="a tri" style="left:1228.8px;top:710px;border-top-color:#aaa;"></div>
<div class="a" style="left:476px;top:741px;width:1px;height:118px;background:#e4e4e4;"></div>
<div class="a" style="left:493px;top:780px;width:1px;height:52px;background:#e0e0e0;"></div>
<div class="a" style="left:493px;top:791px;width:7px;height:1px;background:#e0e0e0;"></div>
<div class="a" style="left:493px;top:811px;width:7px;height:1px;background:#e0e0e0;"></div>
<div class="a" style="left:493px;top:831px;width:7px;height:1px;background:#e0e0e0;"></div>
<div class="a" style="left:455.0px;top:727.0px;width:9px;height:9px;background:#fff;border:1px solid #777;box-sizing:border-box;"></div>
<div class="a" style="left:457.0px;top:731.0px;width:5px;height:1px;background:#333;"></div>
<span class="t" style="font-size:11.5px;color:#333;line-height:15.5px;top:723.75px;letter-spacing:0.064px;left:468px;">Характеристики вычислимого ряда</span>
<div class="a" style="left:472.0px;top:747.0px;width:9px;height:9px;background:#fff;border:1px solid #777;box-sizing:border-box;"></div>
<div class="a" style="left:474.0px;top:751.0px;width:5px;height:1px;background:#333;"></div>
<div class="a" style="left:476.0px;top:749.0px;width:1px;height:5px;background:#333;"></div>
<span class="t" style="font-size:11.5px;color:#333;line-height:15.5px;top:743.75px;letter-spacing:0.050px;left:485px;">Критерии качества</span>
<div class="a" style="left:482px;top:741px;width:742px;height:19px;border:1px dotted #222;box-sizing:border-box;"></div>
<div class="a" style="left:472.0px;top:767.0px;width:9px;height:9px;background:#fff;border:1px solid #777;box-sizing:border-box;"></div>
<div class="a" style="left:474.0px;top:771.0px;width:5px;height:1px;background:#333;"></div>
<span class="t" style="font-size:11.5px;color:#333;line-height:15.5px;top:763.75px;letter-spacing:0.261px;left:485px;">Информационные критерии</span>
<span class="t" style="font-size:11.5px;color:#333;line-height:15.5px;top:783.75px;letter-spacing:0.247px;left:502px;">Информационный критерий Акаике</span>
<span class="t" style="font-size:11.5px;color:#333;line-height:15.5px;top:803.75px;letter-spacing:0.249px;left:502px;">Информационный критерий Шварца</span>
<span class="t" style="font-size:11.5px;color:#333;line-height:15.5px;top:823.75px;letter-spacing:0.178px;left:502px;">HQ-критерий</span>
<div class="a" style="left:472.0px;top:847.0px;width:9px;height:9px;background:#fff;border:1px solid #777;box-sizing:border-box;"></div>
<div class="a" style="left:474.0px;top:851.0px;width:5px;height:1px;background:#333;"></div>
<span class="t" style="font-size:11.5px;color:#333;line-height:15.5px;top:843.75px;letter-spacing:0.247px;left:485px;">Диагностические критерии</span>
<span class="t" style="font-size:11.0px;color:#333;line-height:15.0px;top:784.0px;letter-spacing:-0.294px;left:901.5px;">8,35404</span>
<span class="t" style="font-size:11.0px;color:#333;line-height:15.0px;top:804.0px;letter-spacing:-0.294px;left:901.5px;">8,54285</span>
<span class="t" style="font-size:11.0px;color:#333;line-height:15.0px;top:824.0px;letter-spacing:-0.294px;left:901.5px;">8,35203</span>
<div class="a" style="left:1229.1000000000001px;top:737.5px;width:6.6px;height:104.69999999999999px;background:#f0f0f0;border:1px solid #e2e2e2;box-sizing:border-box;"></div>
<div class="a" style="left:1224.4px;top:721.5px;width:16.2px;height:17px;background:#f1f1f1;border:1px solid #dcdcdc;box-sizing:border-box;border-radius:3px;"></div>
<div class="a" style="left:1224.4px;top:841.2px;width:16.2px;height:17px;background:#fff;border:1px solid #dcdcdc;box-sizing:border-box;border-radius:3px;"></div>
<div class="a" style="left:1224.4px;top:740px;width:16.2px;height:12.2px;background:#fff;border:1px solid #dcdcdc;box-sizing:border-box;border-radius:3px;"></div>
<div class="a triu" style="left:1228.9px;top:728.0px;border-bottom-color:#999;transform:scale(.85)"></div>
<div class="a tri" style="left:1228.9px;top:847.7px;border-top-color:#555;transform:scale(.85)"></div>
<span class="t" style="font-size:10.67px;color:#000;line-height:14.67px;top:-3.2350000000000003px;letter-spacing:0.221px;left:169.7px;">Панель быстрого доступа</span>
<div class="a" style="left:235px;top:12px;width:1px;height:57px;background:#4580c8;"></div>
<span class="t" style="font-size:10.67px;color:#000;line-height:14.67px;top:54.964999999999996px;letter-spacing:0.230px;left:32.300000000000004px;">Главное</span>
<span class="t" style="font-size:10.67px;color:#000;line-height:14.67px;top:67.565px;letter-spacing:0.220px;left:46.60000000000001px;">меню</span>
<div class="a" style="left:74px;top:69px;width:30px;height:1px;background:#4580c8;"></div>
<span class="t" style="font-size:10.67px;color:#000;line-height:14.67px;top:113.56500000000001px;letter-spacing:0.175px;left:44.0px;">Лента</span>
<span class="t" style="font-size:10.67px;color:#000;line-height:14.67px;top:127.06500000000001px;letter-spacing:0.531px;left:-1.1000000000000085px;">инструментов</span>
<div class="a" style="left:74px;top:128px;width:30px;height:1px;background:#4580c8;"></div>
<span class="t" style="font-size:10.67px;color:#000;line-height:14.67px;top:434.46500000000003px;letter-spacing:0.346px;left:36.2px;">Дерево</span>
<span class="t" style="font-size:10.67px;color:#000;line-height:14.67px;top:447.665px;letter-spacing:0.152px;left:43.599999999999994px;">рядов</span>
<div class="a" style="left:74px;top:448px;width:362px;height:1px;background:#4580c8;"></div>
<span class="t" style="font-size:10.67px;color:#000;line-height:14.67px;top:514.5649999999999px;letter-spacing:0.121px;left:32.800000000000004px;">Боковая</span>
<span class="t" style="font-size:10.67px;color:#000;line-height:14.67px;top:527.665px;letter-spacing:0.113px;left:38.900000000000006px;">панель</span>
<div class="a" style="left:74px;top:529px;width:30px;height:1px;background:#4580c8;"></div>
<span class="t" style="font-size:10.67px;color:#000;line-height:14.67px;top:54.765px;letter-spacing:0.114px;left:1288.5px;">Главное</span>
<span class="t" style="font-size:10.67px;color:#000;line-height:14.67px;top:67.56500000000001px;letter-spacing:-0.180px;left:1288.5px;">меню</span>
<div class="a" style="left:1259px;top:69px;width:30px;height:1px;background:#4580c8;"></div>
<span class="t" style="font-size:10.67px;color:#000;line-height:14.67px;top:403.565px;letter-spacing:-0.056px;left:1288.5px;">Рабочая</span>
<span class="t" style="font-size:10.67px;color:#000;line-height:14.67px;top:416.365px;letter-spacing:0.289px;left:1288.5px;">область</span>
<div class="a" style="left:1259px;top:418px;width:30px;height:1px;background:#4580c8;"></div>
<span class="t" style="font-size:10.67px;color:#000;line-height:14.67px;top:757.665px;letter-spacing:-0.126px;left:1288.5px;">Панель</span>
<span class="t" style="font-size:10.67px;color:#000;line-height:14.67px;top:770.4649999999999px;letter-spacing:0.460px;left:1288.5px;">статистики</span>
<div class="a" style="left:1259px;top:772px;width:30px;height:1px;background:#4580c8;"></div>
<div class="a" style="left:230.5px;top:65.0px;width:9.0px;height:9.0px;border-radius:50%;background:#4580c8"></div>
<div class="a" style="left:100.0px;top:65.0px;width:9.0px;height:9.0px;border-radius:50%;background:#4580c8"></div>
<div class="a" style="left:100.0px;top:124.0px;width:9.0px;height:9.0px;border-radius:50%;background:#4580c8"></div>
<div class="a" style="left:100.0px;top:525.0px;width:9.0px;height:9.0px;border-radius:50%;background:#4580c8"></div>
<div class="a" style="left:431.5px;top:444.0px;width:9.0px;height:9.0px;border-radius:50%;background:#4580c8"></div>
<div class="a" style="left:1254.0px;top:65.0px;width:9.0px;height:9.0px;border-radius:50%;background:#4580c8"></div>
<div class="a" style="left:1254.0px;top:414.0px;width:9.0px;height:9.0px;border-radius:50%;background:#4580c8"></div>
<div class="a" style="left:1254.0px;top:768.0px;width:9.0px;height:9.0px;border-radius:50%;background:#4580c8"></div>
</body></html>
